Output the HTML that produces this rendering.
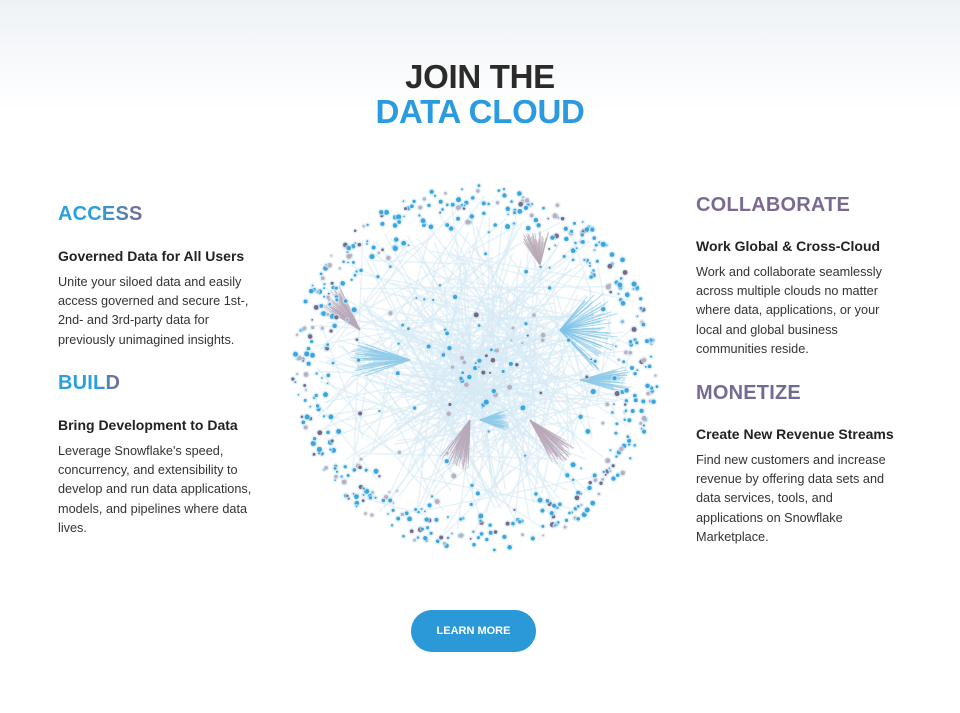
<!DOCTYPE html>
<html><head><meta charset="utf-8"><style>
*{margin:0;padding:0;box-sizing:border-box}
body{width:960px;height:713px;overflow:hidden;background:#fff;font-family:"Liberation Sans",sans-serif;position:relative;color:#2a2a2a}
.bg{position:absolute;left:0;top:0;width:960px;height:110px;background:linear-gradient(#eef2f6,#fff)}
.t{position:absolute;left:0;width:960px;text-align:center;font-weight:bold;font-size:33px;letter-spacing:-0.3px}
h2{position:absolute;font-size:20px;font-weight:bold;background:linear-gradient(90deg,#2a9fdf 0%,#2a9fdf 45%,#7a6a92 100%);-webkit-background-clip:text;background-clip:text;color:transparent;letter-spacing:0.2px}
h3{position:absolute;font-size:14px;font-weight:bold;color:#222}
p{position:absolute;font-size:12.7px;line-height:19.2px;color:#333}
.btn{position:absolute;left:411px;top:610px;width:125px;height:42px;border-radius:21px;background:#2b98d8;color:#fff;font-size:11px;font-weight:bold;text-align:center;line-height:42px}
svg{position:absolute;left:0;top:0}
</style></head><body>
<div class="bg"></div>
<div class="t" style="top:58px;color:#2b2b2b">JOIN THE</div>
<div class="t" style="top:93px;color:#2a9be0">DATA CLOUD</div>
<svg id="g" width="960" height="713"></svg>
<h2 style="left:58px;top:203px">ACCESS</h2>
<h3 style="left:58px;top:248px">Governed Data for All Users</h3>
<p style="left:58px;top:273px;width:205px">Unite your siloed data and easily access governed and secure 1st-, 2nd- and 3rd-party data for previously unimagined insights.</p>
<h2 style="left:58px;top:372px;background:linear-gradient(90deg,#2a9fdf 0%,#2a9fdf 60%,#7a6a92 100%);-webkit-background-clip:text;background-clip:text">BUILD</h2>
<h3 style="left:58px;top:417px">Bring Development to Data</h3>
<p style="left:58px;top:442px;width:200px">Leverage Snowflake's speed, concurrency, and extensibility to develop and run data applications, models, and pipelines where data lives.</p>
<h2 style="left:696px;top:194px;background:linear-gradient(90deg,#7a6a92,#7a6a92);-webkit-background-clip:text;background-clip:text">COLLABORATE</h2>
<h3 style="left:696px;top:238px">Work Global &amp; Cross-Cloud</h3>
<p style="left:696px;top:263px;width:200px">Work and collaborate seamlessly across multiple clouds no matter where data, applications, or your local and global business communities reside.</p>
<h2 style="left:696px;top:382px;background:linear-gradient(90deg,#7a6a92,#6d6a96);-webkit-background-clip:text;background-clip:text">MONETIZE</h2>
<h3 style="left:696px;top:426px">Create New Revenue Streams</h3>
<p style="left:696px;top:451px;width:200px">Find new customers and increase revenue by offering data sets and data services, tools, and applications on Snowflake Marketplace.</p>
<div class="btn">LEARN MORE</div>
<script>
var s=12345;function r(){s=(s*16807)%2147483647;return s/2147483647}
var cx=475,cy=368,R=183,o='';
for(var i=0;i<400;i++){var a=r()*6.283,b=r()*6.283,d1=r()*R*0.9,d2=r()*R*0.95;
o+='<line x1="'+(cx+Math.cos(a)*d1)+'" y1="'+(cy+Math.sin(a)*d1)+'" x2="'+(cx+Math.cos(b)*d2)+'" y2="'+(cy+Math.sin(b)*d2)+'" stroke="#d6eaf5" stroke-width="1.5" opacity="0.55"/>'}
var fans=[[560,330,-0.9,0.9,60,'#7cc3e6'],[410,360,2.8,3.5,60,'#8fcbe8'],[540,265,-2.2,-1.3,35,'#b9aab8'],[360,330,-2.6,-2.0,50,'#b8a8b8'],[470,420,1.6,2.3,50,'#b8a8b8'],[530,420,0.5,1.1,55,'#b8a8b8'],[480,420,-0.4,0.4,30,'#8fcbe8'],[580,380,-0.3,0.3,50,'#8fcbe8']];
fans.forEach(function(f){for(var k=0;k<50;k++){var a=f[2]+(f[3]-f[2])*r(),d=f[4]*(0.6+0.4*r());
o+='<line x1="'+f[0]+'" y1="'+f[1]+'" x2="'+(f[0]+Math.cos(a)*d)+'" y2="'+(f[1]+Math.sin(a)*d)+'" stroke="'+f[5]+'" stroke-width="1" opacity="0.6"/>'}});
for(var i=0;i<600;i++){var a=r()*6.283,d=R*(0.72+0.28*Math.sqrt(r()));if(r()<0.2)d=R*r();
var c=r()<0.72?'#3aa6e0':(r()<0.5?'#7a6a8a':'#bcaebb'),rr=0.8+r()*1.8;
var x=cx+Math.cos(a)*d,y=cy+Math.sin(a)*d;
o+='<circle cx="'+x+'" cy="'+y+'" r="'+(rr+1.5)+'" fill="#cfe8f6" opacity="0.6"/><circle cx="'+x+'" cy="'+y+'" r="'+rr+'" fill="'+c+'"/>'}
document.getElementById('g').innerHTML=o;
</script>
</body></html>
